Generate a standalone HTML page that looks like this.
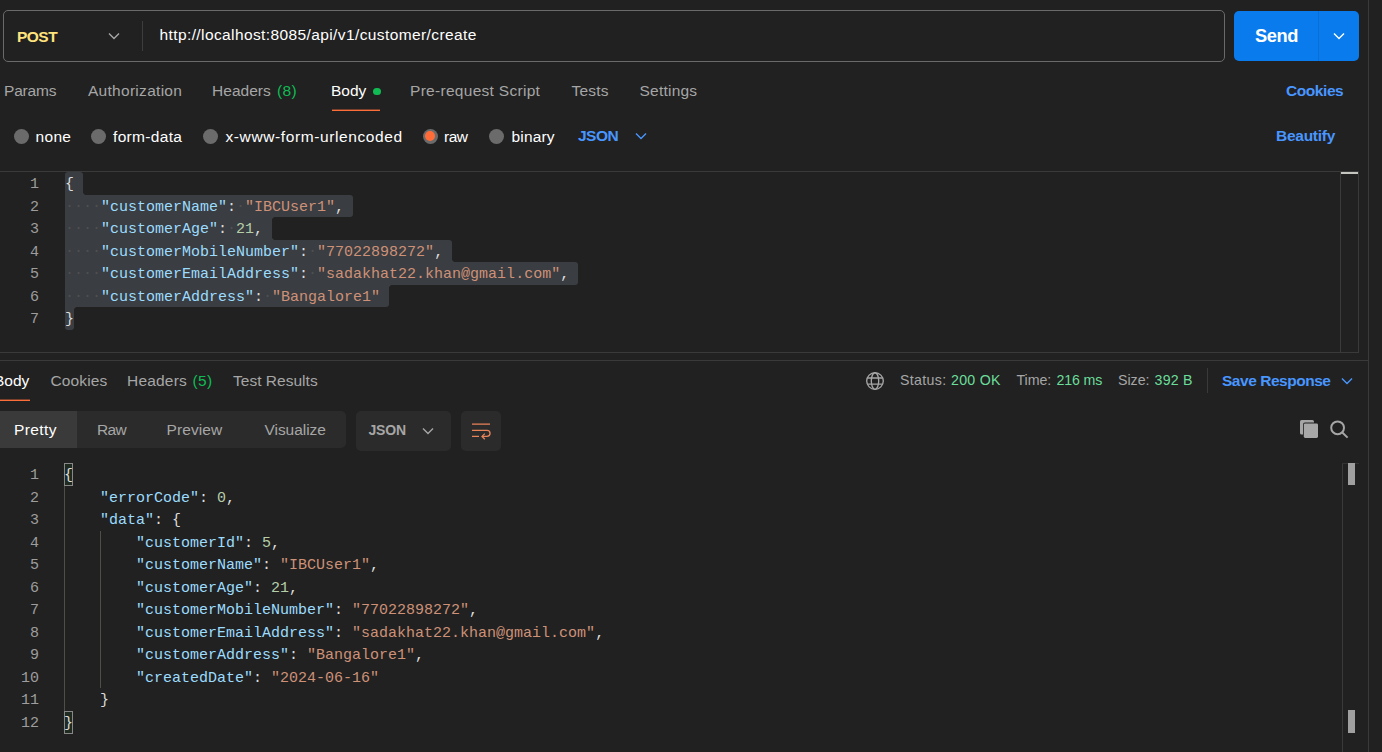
<!DOCTYPE html>
<html lang="en">
<head>
<meta charset="utf-8">
<title>Postman - customer/create</title>
<style>
*{box-sizing:border-box;margin:0;padding:0}
html,body{width:1382px;height:752px;overflow:hidden;background:#212121}
body{position:relative;font-family:"Liberation Sans",Arial,sans-serif;font-size:15px;color:#fff}
.abs{position:absolute}
.t{position:absolute;white-space:nowrap;line-height:20px;font-size:15.5px}
.g{color:#a6a6a6}
.w{color:#fff}
.b{font-weight:bold}
.blue{color:#4896ff}
.green{color:#10bb54}
.green2{color:#6bdd9a}
.line{position:absolute;background:#3a3a3a}
.radio{position:absolute;width:15px;height:15px;border-radius:50%;background:#6b6b6b}
.mono{font-family:"Liberation Mono","DejaVu Sans Mono",monospace;font-size:15px;line-height:22.5px;white-space:pre}
.ln{position:absolute;left:0;width:39px;text-align:right;color:#9d9d9d;margin-top:2px}
.code{position:absolute;left:65px;color:#dcdcdc;margin-top:2px}
#resp .code{left:64px}
.bm{position:absolute;left:64px;width:9px;height:23px;border:1px solid #888;background:#1f2a21}
.ig{position:absolute;width:1px;background:#4f4f4a}
.k{color:#9cdcfe}
.s{color:#ce9178}
.n{color:#b5cea8}
.p{color:#dcdcdc}
.sel{position:absolute;background:#3a3d41;height:22.5px;left:65px}
.ws{color:#4e5052;position:relative;top:-1px}
</style>
</head>
<body>

<!-- URL bar -->
<div class="abs" style="left:3px;top:10px;width:1222px;height:52px;border:1px solid #6a6a6a;border-radius:5px"></div>
<div class="line" style="left:142px;top:21px;width:1px;height:30px;background:#3d3d3d"></div>
<span class="t b" id="t1" style="left:17.00px;top:26.8px;color:#ffe47e;letter-spacing:-0.533px">POST</span>
<svg class="abs" style="left:107.3px;top:31.3px" width="14" height="10" viewBox="0 0 14 10"><path d="M2 2.5 L7 7.5 L12 2.5" fill="none" stroke="#a6a6a6" stroke-width="1.4"/></svg>
<span class="t w" id="t2" style="left:159.50px;top:24.8px;letter-spacing:0.395px">http://localhost:8085/api/v1/customer/create</span>

<!-- Send button -->
<div class="abs" style="left:1234px;top:11px;width:125px;height:50px;background:#097bed;border-radius:5px"></div>
<div class="line" style="left:1318px;top:11px;width:1px;height:50px;background:#0a6fd4"></div>
<span class="t b w" id="t3" style="left:1255.00px;top:23.8px;font-size:18.3px;line-height:24px;letter-spacing:-0.467px">Send</span>
<svg class="abs" style="left:1332px;top:31px" width="14" height="10" viewBox="0 0 14 10"><path d="M2 2.5 L7 7.5 L12 2.5" fill="none" stroke="#fff" stroke-width="1.4"/></svg>

<!-- right pane border -->
<div class="line" style="left:1368px;top:0;width:1px;height:752px"></div>

<!-- request tabs -->
<span class="t g" id="t4" style="left:4.00px;top:81px;letter-spacing:-0.200px">Params</span>
<span class="t g" id="t5" style="left:88.00px;top:81px;letter-spacing:0.284px">Authorization</span>
<span class="t g" id="t6" style="left:212.00px;top:81px;letter-spacing:0.034px">Headers</span>
<span class="t green" id="t6b" style="left:277.00px;top:81px;letter-spacing:0.300px">(8)</span>
<span class="t w" id="t7" style="left:331.00px;top:81px;letter-spacing:0.000px">Body</span>
<div class="abs" style="left:373px;top:87.5px;width:7.5px;height:7.5px;border-radius:50%;background:#10bb54"></div>
<div class="abs" style="left:332px;top:109px;width:48px;height:2px;background:linear-gradient(#7a3f2a 0 1px,#fb6e39 1px 2px)"></div>
<span class="t g" id="t8" style="left:410.00px;top:81px;letter-spacing:0.294px">Pre-request Script</span>
<span class="t g" id="t9" style="left:571.50px;top:81px;letter-spacing:0.200px">Tests</span>
<span class="t g" id="t10" style="left:639.50px;top:81px;letter-spacing:0.229px">Settings</span>
<span class="t b blue" id="t11" style="left:1286.00px;top:81px;letter-spacing:-0.433px">Cookies</span>

<!-- body type row -->
<div class="radio" style="left:14px;top:128.5px"></div>
<span class="t w" id="t12" style="left:35.50px;top:126.8px;letter-spacing:0.334px">none</span>
<div class="radio" style="left:91px;top:128.5px"></div>
<span class="t w" id="t13" style="left:113.00px;top:126.8px;letter-spacing:0.325px">form-data</span>
<div class="radio" style="left:203px;top:128.5px"></div>
<span class="t w" id="t14" style="left:225.50px;top:126.8px;letter-spacing:0.600px">x-www-form-urlencoded</span>
<div class="radio" style="left:422.5px;top:128.5px;background:#6b6b6b"></div>
<div class="abs" style="left:425px;top:131px;width:10px;height:10px;border-radius:50%;background:#ff6c37"></div>
<span class="t w" id="t15" style="left:444.00px;top:126.8px;letter-spacing:-0.500px">raw</span>
<div class="radio" style="left:489px;top:128.5px"></div>
<span class="t w" id="t16" style="left:511.50px;top:126.8px;letter-spacing:0.160px">binary</span>
<span class="t b blue" id="t17" style="left:578.00px;top:125.8px;letter-spacing:-0.533px">JSON</span>
<svg class="abs" style="left:634px;top:131px" width="14" height="10" viewBox="0 0 14 10"><path d="M2 2.5 L7 7.5 L12 2.5" fill="none" stroke="#4896ff" stroke-width="1.4"/></svg>
<span class="t b blue" id="t18" style="left:1276.00px;top:125.8px;letter-spacing:-0.258px">Beautify</span>

<!-- request editor -->
<div class="line" style="left:0;top:171px;width:1359px;height:1px"></div>
<div class="line" style="left:0;top:352px;width:1359px;height:1px"></div>
<div class="line" style="left:1340px;top:172px;width:1px;height:180px"></div>
<div class="line" style="left:1358px;top:172px;width:1px;height:180px"></div>
<div class="abs" style="left:1341px;top:172px;width:17px;height:2px;background:#c6c6c0"></div>

<div id="req" class="abs mono" style="left:0;top:172px;width:1340px;height:180px">
<div class="sel" style="top:0.0px;width:18px;border-radius:3px 3px 0px 0px"></div>
<div class="sel" style="top:22.5px;width:288px;border-radius:0px 3px 3px 0px"></div>
<div class="sel" style="top:45.0px;width:207px;border-radius:0px 0px 0px 0px"></div>
<div class="sel" style="top:67.5px;width:387px;border-radius:0px 3px 0px 0px"></div>
<div class="sel" style="top:90.0px;width:513px;border-radius:0px 3px 3px 0px"></div>
<div class="sel" style="top:112.5px;width:324px;border-radius:0px 0px 3px 0px"></div>
<div class="sel" style="top:135.0px;width:9px;border-radius:0px 0px 3px 3px"></div>
<div class="abs" style="left:83.0px;top:19.5px;width:3px;height:3px;background:radial-gradient(circle at 100% 0,#212121 2.6px,#3a3d41 3.2px)"></div>
<div class="abs" style="left:272.0px;top:45px;width:3px;height:3px;background:radial-gradient(circle at 100% 100%,#212121 2.6px,#3a3d41 3.2px)"></div>
<div class="abs" style="left:272.0px;top:64.5px;width:3px;height:3px;background:radial-gradient(circle at 100% 0,#212121 2.6px,#3a3d41 3.2px)"></div>
<div class="abs" style="left:452.0px;top:87px;width:3px;height:3px;background:radial-gradient(circle at 100% 0,#212121 2.6px,#3a3d41 3.2px)"></div>
<div class="abs" style="left:389.0px;top:112.5px;width:3px;height:3px;background:radial-gradient(circle at 100% 100%,#212121 2.6px,#3a3d41 3.2px)"></div>
<div class="abs" style="left:74.0px;top:135px;width:3px;height:3px;background:radial-gradient(circle at 100% 100%,#212121 2.6px,#3a3d41 3.2px)"></div>
<div class="ln" style="top:0.0px">1</div>
<div class="code" style="top:0.0px"><span class="p">{</span></div>
<div class="ln" style="top:22.5px">2</div>
<div class="code" style="top:22.5px"><span class="ws">&middot;&middot;&middot;&middot;</span><span class="k">"customerName"</span><span class="p">:</span><span class="ws">&middot;</span><span class="s">"IBCUser1"</span><span class="p">,</span></div>
<div class="ln" style="top:45.0px">3</div>
<div class="code" style="top:45.0px"><span class="ws">&middot;&middot;&middot;&middot;</span><span class="k">"customerAge"</span><span class="p">:</span><span class="ws">&middot;</span><span class="n">21</span><span class="p">,</span></div>
<div class="ln" style="top:67.5px">4</div>
<div class="code" style="top:67.5px"><span class="ws">&middot;&middot;&middot;&middot;</span><span class="k">"customerMobileNumber"</span><span class="p">:</span><span class="ws">&middot;</span><span class="s">"77022898272"</span><span class="p">,</span></div>
<div class="ln" style="top:90.0px">5</div>
<div class="code" style="top:90.0px"><span class="ws">&middot;&middot;&middot;&middot;</span><span class="k">"customerEmailAddress"</span><span class="p">:</span><span class="ws">&middot;</span><span class="s">"sadakhat22.khan@gmail.com"</span><span class="p">,</span></div>
<div class="ln" style="top:112.5px">6</div>
<div class="code" style="top:112.5px"><span class="ws">&middot;&middot;&middot;&middot;</span><span class="k">"customerAddress"</span><span class="p">:</span><span class="ws">&middot;</span><span class="s">"Bangalore1"</span><span class="p"></span></div>
<div class="ln" style="top:135.0px">7</div>
<div class="code" style="top:135.0px"><span class="p">}</span></div>
</div>

<!-- response header -->
<div class="line" style="left:0;top:360px;width:1368px;height:1px"></div>
<span class="t w" id="t19" style="left:-6.00px;top:371px;letter-spacing:0.000px">Body</span>
<div class="abs" style="left:0;top:399px;width:30px;height:2px;background:linear-gradient(#7a3f2a 0 1px,#fb6e39 1px 2px)"></div>
<span class="t g" id="t20" style="left:50.50px;top:371px;letter-spacing:0.133px">Cookies</span>
<span class="t g" id="t21" style="left:127.00px;top:371px;letter-spacing:0.201px">Headers</span>
<span class="t green" id="t21b" style="left:192.50px;top:371px;letter-spacing:0.400px">(5)</span>
<span class="t g" id="t22" style="left:233.00px;top:371px;letter-spacing:0.019px">Test Results</span>

<svg class="abs" style="left:865px;top:371px" width="20" height="20" viewBox="0 0 20 20" fill="none" stroke="#a6a6a6" stroke-width="1.35"><circle cx="10" cy="10" r="8.3"/><ellipse cx="10" cy="10" rx="3.7" ry="8.3"/><path d="M2.4 7 H17.6 M2.4 13.1 H17.6"/></svg>
<span class="t g" id="t23" style="left:900.00px;top:370.3px;font-size:14.2px;letter-spacing:0.334px">Status:</span>
<span class="t green2" id="t24" style="left:951.00px;top:370.3px;font-size:14.2px;letter-spacing:0.280px">200 OK</span>
<span class="t g" id="t25" style="left:1016.50px;top:370.3px;font-size:14.2px;letter-spacing:-0.050px">Time:</span>
<span class="t green2" id="t26" style="left:1056.50px;top:370.3px;font-size:14.2px;letter-spacing:-0.160px">216 ms</span>
<span class="t g" id="t27" style="left:1118.00px;top:370.3px;font-size:14.2px;letter-spacing:0.000px">Size:</span>
<span class="t green2" id="t28" style="left:1154.50px;top:370.3px;font-size:14.2px;letter-spacing:0.250px">392 B</span>
<div class="line" style="left:1207px;top:368px;width:1px;height:25px"></div>
<span class="t b blue" id="t29" style="left:1222.00px;top:371px;letter-spacing:-0.466px">Save Response</span>
<svg class="abs" style="left:1340px;top:376px" width="14" height="10" viewBox="0 0 14 10"><path d="M2 2.5 L7 7.5 L12 2.5" fill="none" stroke="#4896ff" stroke-width="1.4"/></svg>

<!-- view mode -->
<div class="abs" style="left:-6px;top:411px;width:352px;height:37px;background:#2b2b2b;border-radius:5px"></div>
<div class="abs" style="left:0;top:411px;width:77px;height:37px;background:#3a3a3a"></div>
<span class="t w" id="t30" style="left:14.00px;top:420px;letter-spacing:0.400px">Pretty</span>
<span class="t g" id="t31" style="left:97.00px;top:420px;letter-spacing:-0.700px">Raw</span>
<span class="t g" id="t32" style="left:166.50px;top:420px;letter-spacing:0.100px">Preview</span>
<span class="t g" id="t33" style="left:264.50px;top:420px;letter-spacing:-0.050px">Visualize</span>
<div class="abs" style="left:356px;top:411px;width:95px;height:40px;background:#2b2b2b;border-radius:5px"></div>
<span class="t b g" id="t34" style="left:368.50px;top:420px;font-size:14px;letter-spacing:-0.200px">JSON</span>
<svg class="abs" style="left:421px;top:426px" width="14" height="10" viewBox="0 0 14 10"><path d="M2 2.5 L7 7.5 L12 2.5" fill="none" stroke="#a6a6a6" stroke-width="1.4"/></svg>
<div class="abs" style="left:461px;top:411px;width:40px;height:40px;background:#2b2b2b;border-radius:5px"></div>
<svg class="abs" style="left:461px;top:411px" width="40" height="40" viewBox="0 0 40 40" fill="none" stroke="#e8835a" stroke-width="1.3"><path d="M11 13.2 H29 M11 19.3 H26 A3 3 0 0 1 26 25.4 H21 M11 25.4 H18"/><path d="M23.8 22.6 L21 25.4 L23.8 28.2"/></svg>

<!-- copy / search -->
<svg class="abs" style="left:1298px;top:418px" width="22" height="22" viewBox="0 0 22 22"><rect x="2" y="2" width="14" height="14.5" rx="1.6" fill="#a6a6a6"/><rect x="5" y="4.6" width="15.8" height="16.2" rx="2" fill="#212121"/><rect x="5.8" y="5.4" width="14.2" height="14.6" rx="1.4" fill="#a8a8a8"/></svg>
<svg class="abs" style="left:1328px;top:418px" width="22" height="22" viewBox="0 0 22 22" fill="none" stroke="#a6a6a6" stroke-width="2"><circle cx="9.6" cy="9.8" r="6.4"/><path d="M14.3 14.5 L19.6 19.6"/></svg>

<!-- response editor chrome -->
<div class="line" style="left:1342px;top:463px;width:1px;height:289px"></div>
<div class="line" style="left:1342px;top:463px;width:17px;height:1px;background:#333"></div>
<div class="abs" style="left:1348px;top:463px;width:7px;height:22px;background:#a0a0a0"></div>
<div class="abs" style="left:1348px;top:710px;width:7px;height:23px;background:#a0a0a0"></div>

<div id="resp" class="abs mono" style="left:0;top:463.3px;width:1340px;height:289px">
<div class="bm" style="top:-0.3px"></div>
<div class="bm" style="top:247.7px"></div>
<div class="ig" style="left:64px;top:22.7px;height:225px"></div>
<div class="ig" style="left:100px;top:67.7px;height:157px"></div>
<div class="ln" style="top:0.0px">1</div>
<div class="code" style="top:0.0px"><span class="p">{</span></div>
<div class="ln" style="top:22.5px">2</div>
<div class="code" style="top:22.5px">    <span class="k">"errorCode"</span><span class="p">: </span><span class="n">0</span><span class="p">,</span></div>
<div class="ln" style="top:45.0px">3</div>
<div class="code" style="top:45.0px">    <span class="k">"data"</span><span class="p">: </span><span class="p">{</span><span class="p"></span></div>
<div class="ln" style="top:67.5px">4</div>
<div class="code" style="top:67.5px">        <span class="k">"customerId"</span><span class="p">: </span><span class="n">5</span><span class="p">,</span></div>
<div class="ln" style="top:90.0px">5</div>
<div class="code" style="top:90.0px">        <span class="k">"customerName"</span><span class="p">: </span><span class="s">"IBCUser1"</span><span class="p">,</span></div>
<div class="ln" style="top:112.5px">6</div>
<div class="code" style="top:112.5px">        <span class="k">"customerAge"</span><span class="p">: </span><span class="n">21</span><span class="p">,</span></div>
<div class="ln" style="top:135.0px">7</div>
<div class="code" style="top:135.0px">        <span class="k">"customerMobileNumber"</span><span class="p">: </span><span class="s">"77022898272"</span><span class="p">,</span></div>
<div class="ln" style="top:157.5px">8</div>
<div class="code" style="top:157.5px">        <span class="k">"customerEmailAddress"</span><span class="p">: </span><span class="s">"sadakhat22.khan@gmail.com"</span><span class="p">,</span></div>
<div class="ln" style="top:180.0px">9</div>
<div class="code" style="top:180.0px">        <span class="k">"customerAddress"</span><span class="p">: </span><span class="s">"Bangalore1"</span><span class="p">,</span></div>
<div class="ln" style="top:202.5px">10</div>
<div class="code" style="top:202.5px">        <span class="k">"createdDate"</span><span class="p">: </span><span class="s">"2024-06-16"</span><span class="p"></span></div>
<div class="ln" style="top:225.0px">11</div>
<div class="code" style="top:225.0px">    <span class="p">}</span></div>
<div class="ln" style="top:247.5px">12</div>
<div class="code" style="top:247.5px"><span class="p">}</span></div>
</div>

</body>
</html>
